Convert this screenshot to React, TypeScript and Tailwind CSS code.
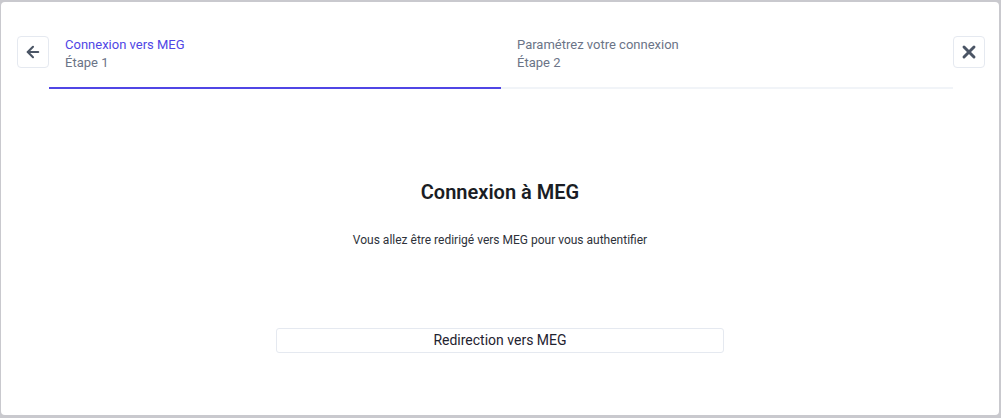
import { ArrowLeft, X } from "lucide-react";

const steps = [
  { title: "Connexion vers MEG", label: "Étape 1", active: true },
  { title: "Paramétrez votre connexion", label: "Étape 2", active: false },
];

export default function App() {
  return (
    <div
      className="h-screen w-full bg-[#c9c9ce] pl-px pr-[2px] pt-[2px] pb-[3px]"
      style={{ fontFamily: "Roboto, 'Liberation Sans', sans-serif" }}
    >
      <div className="flex h-full flex-col rounded-[4px] bg-white">
        {/* header with steps */}
        <div className="flex items-start pl-4 pr-[14px] pt-[34px]">
          <button
            type="button"
            className="flex h-8 w-8 shrink-0 items-center justify-center rounded-[4px] border border-[#e5e9f0] text-[#4b5565]"
          >
            <ArrowLeft size={18} strokeWidth={2.75} />
          </button>

          <div className="flex flex-1">
            {steps.map((step) => (
              <div
                key={step.label}
                className={`flex-1 border-b-2 pb-[15px] pl-4 text-[13px] leading-[18px] ${
                  step.active ? "border-[#5046e5]" : "border-[#f1f4f8]"
                }`}
              >
                <p className={step.active ? "text-[#5046e5]" : "text-[#6b7487]"}>{step.title}</p>
                <p className="text-[#6b7487]">{step.label}</p>
              </div>
            ))}
          </div>

          <button
            type="button"
            className="flex h-8 w-8 shrink-0 items-center justify-center rounded-[4px] border border-[#e5e9f0] text-[#4b5565]"
          >
            <X size={20} strokeWidth={3.5} />
          </button>
        </div>

        {/* body */}
        <div className="flex flex-col items-center">
          <h2 className="mt-[89px] text-[20px] font-semibold leading-7 text-[#1a1d24]">
            Connexion à MEG
          </h2>
          <p className="mt-[26px] text-[12px] leading-4 text-[#2e323a]">
            Vous allez être redirigé vers MEG pour vous authentifier
          </p>
          <button
            type="button"
            className="mt-[80px] h-[25px] w-[448px] rounded-[3px] border border-[#e5e9f0] text-[14px] text-[#1f2330]"
          >
            Redirection vers MEG
          </button>
        </div>
      </div>
    </div>
  );
}
